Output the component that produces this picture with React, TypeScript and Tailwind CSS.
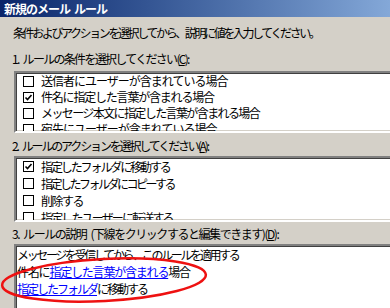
import React from 'react';

const font = "font-['MS_UI_Gothic','Noto_Sans_CJK_JP',sans-serif]";

function Check({ checked }: { checked?: boolean }) {
  return (
    <span className="inline-flex h-[11px] w-[11px] shrink-0 items-center justify-center border border-black bg-white">
      {checked && (
        <svg width="9" height="9" viewBox="0 0 9 9">
          <path d="M1.5 4.5 L3.5 6.5 L7.5 2" fill="none" stroke="black" strokeWidth="1.6" />
        </svg>
      )}
    </span>
  );
}

function Row({ label, checked, track, h }: { label: string; checked?: boolean; track: string; h: string }) {
  return (
    <div className={`flex items-center gap-[7px] pl-[7px] whitespace-nowrap ${h}`}>
      <Check checked={checked} />
      <span className={track}>{label}</span>
    </div>
  );
}

function Sunken({ children, className = '' }: { children: React.ReactNode; className?: string }) {
  return (
    <div
      className={`ml-[14px] w-[420px] overflow-hidden border-2 border-t-[#808080] border-l-[#808080] border-b-white border-r-white bg-white shadow-[inset_1px_1px_0_#404040,inset_-1px_-1px_0_#d4d0c8] ${className}`}
    >
      {children}
    </div>
  );
}

const Sp = () => <span className="inline-block w-[4px]" />;

export default function App() {
  // tracking per line so the widths follow the bitmap font of the original
  const conditions = [
    { label: '送信者にユーザーが含まれている場合', track: 'tracking-[-1px]' },
    { label: '件名に指定した言葉が含まれる場合', checked: true, track: 'tracking-[-1.2px]' },
    { label: 'メッセージ本文に指定した言葉が含まれる場合', track: 'tracking-[-1.6px]' },
    { label: '宛先にユーザーが含まれている場合', track: 'tracking-[-1px]' },
  ];
  const actions = [
    { label: '指定したフォルダに移動する', checked: true, track: 'tracking-[-2.1px]' },
    { label: '指定したフォルダにコピーする', track: 'tracking-[-2.5px]' },
    { label: '削除する', track: 'tracking-[-1.5px]' },
    { label: '指定したユーザーに転送する', track: 'tracking-[-1.85px]' },
  ];

  return (
    <div className={`relative h-[308px] w-[390px] overflow-hidden bg-[#d4d0c8] text-[12px] leading-[16px] text-black ${font}`}>
      <div className="flex h-[17px] items-center bg-gradient-to-r from-[#0a246a] to-[#84a8d8] pl-[4px] font-bold tracking-[-1px] text-white">
        新規のメール<Sp />ルール
      </div>

      <p className="mt-[8px] pl-[13px] tracking-[-2.4px] whitespace-nowrap">
        条件およびアクションを選択してから、説明に値を入力してください。
      </p>

      <p className="mt-[10px] pl-[12px] tracking-[-1.7px] whitespace-nowrap">
        1.<Sp />ルールの条件を選択してください(<span className="underline">C</span>):
      </p>
      <Sunken className="mt-[4px] h-[62px]">
        {conditions.map((c) => (
          <Row key={c.label} label={c.label} checked={c.checked} track={c.track} h="h-[16px]" />
        ))}
      </Sunken>

      <p className="mt-[5px] pl-[12px] tracking-[-2.15px] whitespace-nowrap">
        2.<Sp />ルールのアクションを選択してください(<span className="underline">A</span>):
      </p>
      <Sunken className="mt-[2px] h-[66px]">
        {actions.map((a) => (
          <Row key={a.label} label={a.label} checked={a.checked} track={a.track} h="h-[17px]" />
        ))}
      </Sunken>

      <p className="mt-[4px] pl-[12px] tracking-[-1.45px] whitespace-nowrap">
        3.<Sp />ルールの説明<Sp />(下線をクリックすると編集できます)(<span className="underline">D</span>):
      </p>
      <Sunken className="mt-[2px] h-[80px] pl-[1px] leading-[17px]">
        <div className="tracking-[-2.35px] whitespace-nowrap">メッセージを受信してから、このルールを適用する</div>
        <div className="tracking-[-1.2px] whitespace-nowrap">
          件名に<span className="text-[#0000ff] underline">指定した言葉が含まれる</span>場合
        </div>
        <div className="tracking-[-2px] whitespace-nowrap">
          <span className="text-[#0000ff] underline">指定したフォルダ</span>に移動する
        </div>
      </Sunken>

      <svg className="pointer-events-none absolute left-0 top-[250px]" width="220" height="58" viewBox="0 0 220 58">
        <ellipse cx="104" cy="30" rx="102" ry="21" fill="none" stroke="#ee1111" strokeWidth="2.5" transform="rotate(-3 104 30)" />
      </svg>
    </div>
  );
}
